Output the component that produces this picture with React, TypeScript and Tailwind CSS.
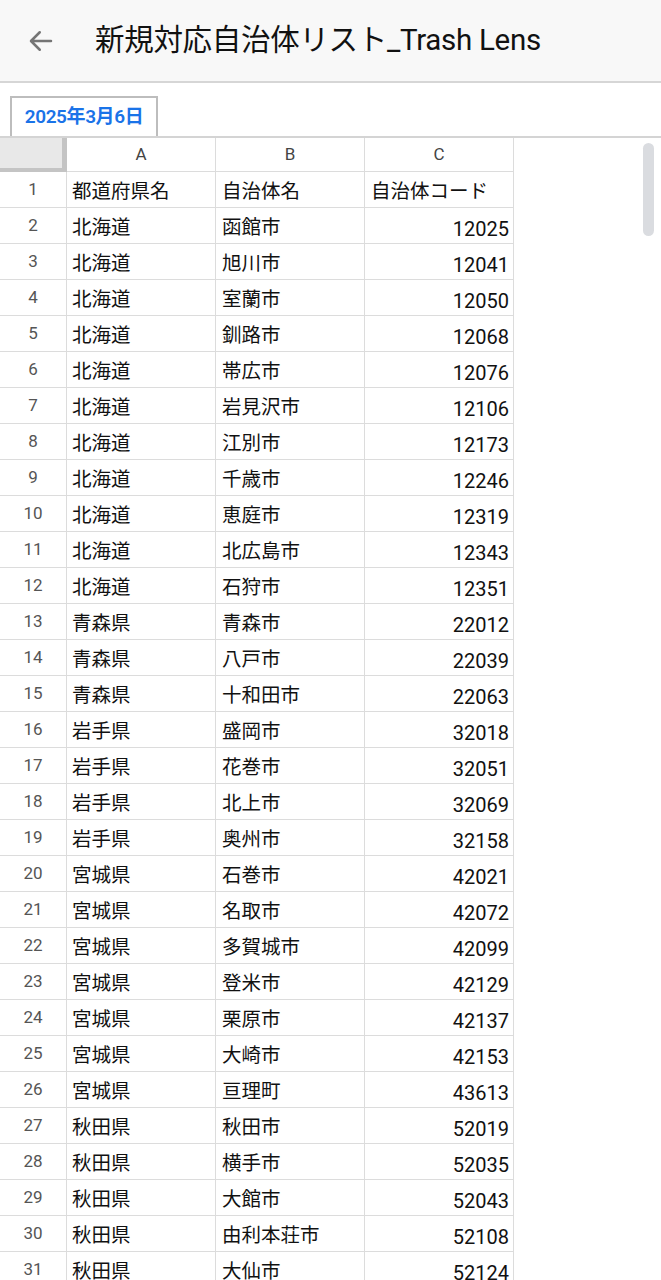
import React from 'react';

const rows: [string, string, string][] = [
  ['北海道', '函館市', '12025'],
  ['北海道', '旭川市', '12041'],
  ['北海道', '室蘭市', '12050'],
  ['北海道', '釧路市', '12068'],
  ['北海道', '帯広市', '12076'],
  ['北海道', '岩見沢市', '12106'],
  ['北海道', '江別市', '12173'],
  ['北海道', '千歳市', '12246'],
  ['北海道', '恵庭市', '12319'],
  ['北海道', '北広島市', '12343'],
  ['北海道', '石狩市', '12351'],
  ['青森県', '青森市', '22012'],
  ['青森県', '八戸市', '22039'],
  ['青森県', '十和田市', '22063'],
  ['岩手県', '盛岡市', '32018'],
  ['岩手県', '花巻市', '32051'],
  ['岩手県', '北上市', '32069'],
  ['岩手県', '奥州市', '32158'],
  ['宮城県', '石巻市', '42021'],
  ['宮城県', '名取市', '42072'],
  ['宮城県', '多賀城市', '42099'],
  ['宮城県', '登米市', '42129'],
  ['宮城県', '栗原市', '42137'],
  ['宮城県', '大崎市', '42153'],
  ['宮城県', '亘理町', '43613'],
  ['秋田県', '秋田市', '52019'],
  ['秋田県', '横手市', '52035'],
  ['秋田県', '大館市', '52043'],
  ['秋田県', '由利本荘市', '52108'],
  ['秋田県', '大仙市', '52124'],
];

const font = { fontFamily: 'Roboto, "Noto Sans CJK JP", sans-serif' };

const cell = 'h-[36px] border-r border-b border-[#dcdcdc] flex items-center';

export default function App() {
  return (
    <div className="relative w-[661px] h-[1280px] overflow-hidden bg-white" style={font}>
      {/* top bar */}
      <div className="h-[83px] bg-[#f8f8f8] border-b-2 border-[#d6d6d6] flex items-center">
        <svg className="ml-[26px] w-[30px] h-[30px]" viewBox="0 0 24 24" fill="none" stroke="#757575" strokeWidth="2" strokeLinecap="round" strokeLinejoin="round">
          <path d="M20 12H4.5M11 5l-7 7 7 7" />
        </svg>
        <h1 className="ml-[39px] text-[29.5px] text-[#111] tracking-[-0.3px] leading-none">新規対応自治体リスト_Trash Lens</h1>
      </div>

      {/* sheet tab */}
      <div className="pt-[13px] pl-[10px] border-b-2 border-[#d4d4d4]">
        <div className="w-[148px] h-[40px] border-2 border-b-0 border-[#bdbdbd] flex items-center justify-center">
          <span className="text-[19px] font-semibold text-[#1a73e8] tracking-[-0.4px]">2025年3月6日</span>
        </div>
      </div>

      {/* grid */}
      <div className="grid grid-cols-[67px_149px_149px_149px] w-[514px]">
        <div className="h-[34px] bg-[#e8e8e8] border-r-[5px] border-b-[4px] border-[#c4c4c4]" />
        {['A', 'B', 'C'].map((c) => (
          <div key={c} className="h-[34px] border-r border-b border-[#dcdcdc] flex items-center justify-center pt-[1px] text-[17px] text-[#444]">
            {c}
          </div>
        ))}

        <div className={`${cell} justify-center pt-[1px] text-[17px] text-[#555]`}>1</div>
        <div className={`${cell} pl-[5px] pt-[4px] text-[19.5px] text-[#111]`}>都道府県名</div>
        <div className={`${cell} pl-[6px] pt-[4px] text-[19.5px] text-[#111]`}>自治体名</div>
        <div className={`${cell} pl-[6px] pt-[4px] text-[19.5px] text-[#111]`}>自治体コード</div>

        {rows.map((r, i) => (
          <React.Fragment key={i}>
            <div className={`${cell} justify-center pt-[1px] text-[17px] text-[#555]`}>{i + 2}</div>
            <div className={`${cell} pl-[5px] pt-[4px] text-[19.5px] text-[#111]`}>{r[0]}</div>
            <div className={`${cell} pl-[6px] pt-[4px] text-[19.5px] text-[#111]`}>{r[1]}</div>
            <div className={`${cell} justify-end pr-[4px] pt-[6px] text-[20px] text-[#111]`}>{r[2]}</div>
          </React.Fragment>
        ))}
      </div>

      {/* scrollbar */}
      <div className="absolute left-[643px] top-[143px] w-[11px] h-[93px] rounded-full bg-[#dadce0]" />
    </div>
  );
}
